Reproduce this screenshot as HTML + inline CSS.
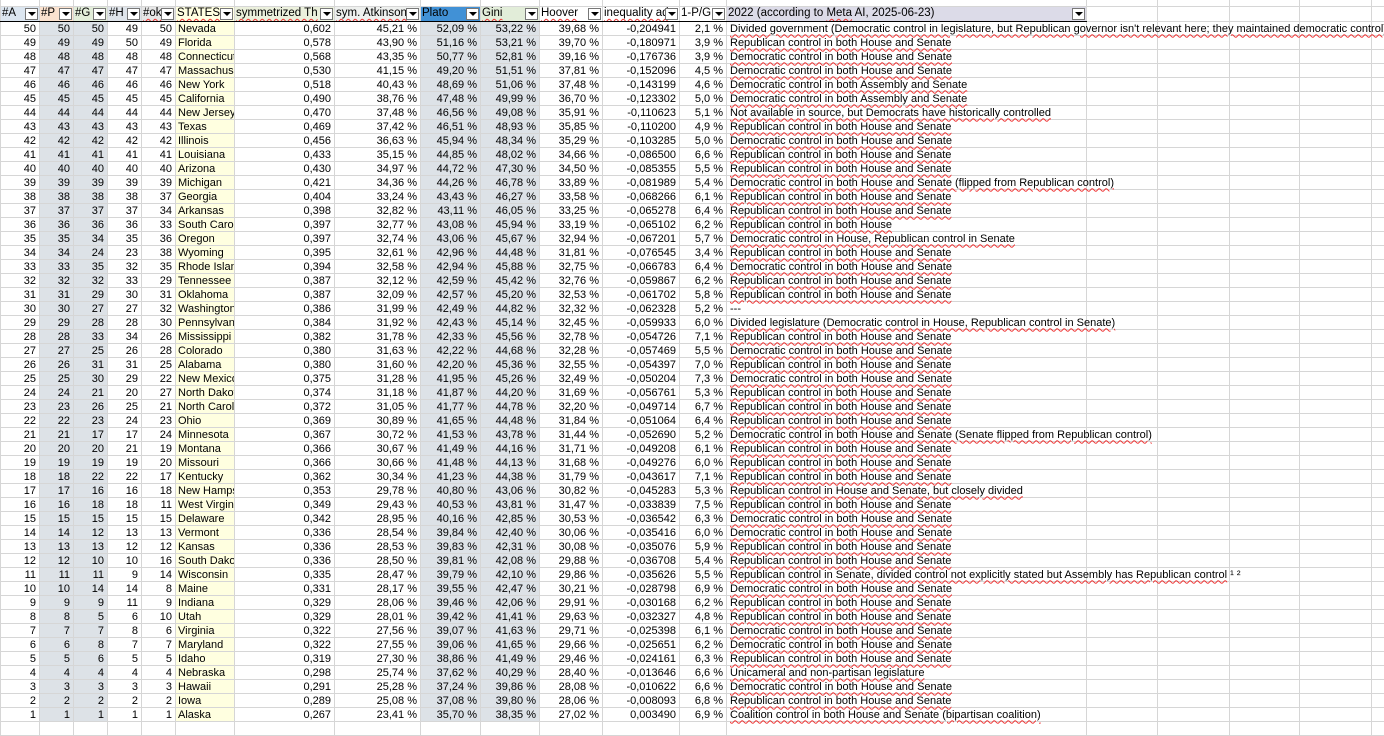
<!DOCTYPE html>
<html><head><meta charset="utf-8"><style>
*{margin:0;padding:0;box-sizing:border-box}
body{width:1384px;height:725px;overflow:hidden;background:#fff;font-family:"Liberation Sans",Arial,sans-serif;font-size:11px;color:#000}
table{border-collapse:collapse;table-layout:fixed;position:absolute;left:0;top:0;width:1384px}
td{height:14px;line-height:12px;border:1px solid #d6d6d6;white-space:nowrap;overflow:hidden;padding:1px 3px 0 2px;text-align:right}
tr.top td{height:6px;line-height:4px;padding:0;background:#fff;border-top:none}
tr.h td{height:15px;line-height:13px;border-bottom:1px solid #000;text-align:left;position:relative;padding:0 0 0 1px;overflow:hidden;font-size:11.5px}
.dd{position:absolute;right:1px;top:1px;width:13px;height:12px;background:#fff;border:1px solid #777}
.dd:after{content:"";position:absolute;left:2px;top:3px;border-left:4px solid transparent;border-right:4px solid transparent;border-top:4px solid #000}
.g{background:#dde2e7}
.y{background:#ffffe0;text-align:left;padding-left:2px}
td.t{text-align:left;overflow:visible;padding-left:3px}
td.t span{text-decoration:underline wavy #e33;text-decoration-thickness:1px;text-underline-offset:2px}
.w{text-decoration:underline wavy #e33;text-decoration-thickness:1px;text-underline-offset:2px}
</style></head><body>
<table>
<colgroup><col style="width:39px"><col style="width:34px"><col style="width:34px"><col style="width:34px"><col style="width:34px"><col style="width:59px"><col style="width:100px"><col style="width:86px"><col style="width:60px"><col style="width:59px"><col style="width:63px"><col style="width:77px"><col style="width:47px"><col style="width:360px"><col style="width:71px"><col style="width:72px"><col style="width:70px"><col style="width:72px"><col style="width:13px"></colgroup>
<tr class="top"><td></td><td></td><td></td><td></td><td></td><td></td><td></td><td></td><td></td><td></td><td></td><td></td><td></td><td></td><td></td><td></td><td></td><td></td><td></td></tr>
<tr class="h">
<td style="background:#dce6f0">#A<i class="dd"></i></td>
<td style="background:#fbe2cf">#P<i class="dd"></i></td>
<td style="background:#e2edd9">#G<i class="dd"></i></td>
<td style="background:#dfe4ea">#H<i class="dd"></i></td>
<td style="background:#e6e6e6"><span class="w">#ok</span><i class="dd"></i></td>
<td style="background:#ffffe0"><span class="w">STATES</span><i class="dd"></i></td>
<td style="background:#ebf0dc"><span class="w">symmetrized Th</span><i class="dd"></i></td>
<td style="background:#eef0ee"><span class="w">sym. Atkinson</span><i class="dd"></i></td>
<td style="background:#4191d6">Plato<i class="dd"></i></td>
<td style="background:#e2edd9"><span class="w">Gini</span><i class="dd"></i></td>
<td style="background:#fff"><span class="w">Hoover</span><i class="dd"></i></td>
<td style="background:#fff"><span class="w">inequality ad</span><i class="dd"></i></td>
<td style="background:#fff">1-P/G<i class="dd"></i></td>
<td style="background:#dcdbe8">2022 (according to <span class="w">Meta</span> AI, 2025-06-23)<i class="dd"></i></td>
<td style="border-bottom-color:#d6d6d6"></td><td style="border-bottom-color:#d6d6d6"></td><td style="border-bottom-color:#d6d6d6"></td><td style="border-bottom-color:#d6d6d6"></td><td style="border-bottom-color:#d6d6d6"></td></tr>
<tr class="d"><td>50</td><td class="g">50</td><td class="g">50</td><td>49</td><td>50</td><td class="y">Nevada</td><td>0,602</td><td>45,21 %</td><td class="g">52,09 %</td><td class="g">53,22 %</td><td>39,68 %</td><td>-0,204941</td><td>2,1 %</td><td class="t"><span>Divided government (Democratic control in legislature, but Republican governor isn't relevant here; they maintained democratic control)</span></td><td></td><td></td><td></td><td></td><td></td></tr>
<tr class="d"><td>49</td><td class="g">49</td><td class="g">49</td><td>50</td><td>49</td><td class="y">Florida</td><td>0,578</td><td>43,90 %</td><td class="g">51,16 %</td><td class="g">53,21 %</td><td>39,70 %</td><td>-0,180971</td><td>3,9 %</td><td class="t"><span>Republican control in both House and Senate</span></td><td></td><td></td><td></td><td></td><td></td></tr>
<tr class="d"><td>48</td><td class="g">48</td><td class="g">48</td><td>48</td><td>48</td><td class="y">Connecticut</td><td>0,568</td><td>43,35 %</td><td class="g">50,77 %</td><td class="g">52,81 %</td><td>39,16 %</td><td>-0,176736</td><td>3,9 %</td><td class="t"><span>Democratic control in both House and Senate</span></td><td></td><td></td><td></td><td></td><td></td></tr>
<tr class="d"><td>47</td><td class="g">47</td><td class="g">47</td><td>47</td><td>47</td><td class="y">Massachusetts</td><td>0,530</td><td>41,15 %</td><td class="g">49,20 %</td><td class="g">51,51 %</td><td>37,81 %</td><td>-0,152096</td><td>4,5 %</td><td class="t"><span>Democratic control in both House and Senate</span></td><td></td><td></td><td></td><td></td><td></td></tr>
<tr class="d"><td>46</td><td class="g">46</td><td class="g">46</td><td>46</td><td>46</td><td class="y">New York</td><td>0,518</td><td>40,43 %</td><td class="g">48,69 %</td><td class="g">51,06 %</td><td>37,48 %</td><td>-0,143199</td><td>4,6 %</td><td class="t"><span>Democratic control in both Assembly and Senate</span></td><td></td><td></td><td></td><td></td><td></td></tr>
<tr class="d"><td>45</td><td class="g">45</td><td class="g">45</td><td>45</td><td>45</td><td class="y">California</td><td>0,490</td><td>38,76 %</td><td class="g">47,48 %</td><td class="g">49,99 %</td><td>36,70 %</td><td>-0,123302</td><td>5,0 %</td><td class="t"><span>Democratic control in both Assembly and Senate</span></td><td></td><td></td><td></td><td></td><td></td></tr>
<tr class="d"><td>44</td><td class="g">44</td><td class="g">44</td><td>44</td><td>44</td><td class="y">New Jersey</td><td>0,470</td><td>37,48 %</td><td class="g">46,56 %</td><td class="g">49,08 %</td><td>35,91 %</td><td>-0,110623</td><td>5,1 %</td><td class="t"><span>Not available in source, but Democrats have historically controlled</span></td><td></td><td></td><td></td><td></td><td></td></tr>
<tr class="d"><td>43</td><td class="g">43</td><td class="g">43</td><td>43</td><td>43</td><td class="y">Texas</td><td>0,469</td><td>37,42 %</td><td class="g">46,51 %</td><td class="g">48,93 %</td><td>35,85 %</td><td>-0,110200</td><td>4,9 %</td><td class="t"><span>Republican control in both House and Senate</span></td><td></td><td></td><td></td><td></td><td></td></tr>
<tr class="d"><td>42</td><td class="g">42</td><td class="g">42</td><td>42</td><td>42</td><td class="y">Illinois</td><td>0,456</td><td>36,63 %</td><td class="g">45,94 %</td><td class="g">48,34 %</td><td>35,29 %</td><td>-0,103285</td><td>5,0 %</td><td class="t"><span>Democratic control in both House and Senate</span></td><td></td><td></td><td></td><td></td><td></td></tr>
<tr class="d"><td>41</td><td class="g">41</td><td class="g">41</td><td>41</td><td>41</td><td class="y">Louisiana</td><td>0,433</td><td>35,15 %</td><td class="g">44,85 %</td><td class="g">48,02 %</td><td>34,66 %</td><td>-0,086500</td><td>6,6 %</td><td class="t"><span>Republican control in both House and Senate</span></td><td></td><td></td><td></td><td></td><td></td></tr>
<tr class="d"><td>40</td><td class="g">40</td><td class="g">40</td><td>40</td><td>40</td><td class="y">Arizona</td><td>0,430</td><td>34,97 %</td><td class="g">44,72 %</td><td class="g">47,30 %</td><td>34,50 %</td><td>-0,085355</td><td>5,5 %</td><td class="t"><span>Republican control in both House and Senate</span></td><td></td><td></td><td></td><td></td><td></td></tr>
<tr class="d"><td>39</td><td class="g">39</td><td class="g">39</td><td>39</td><td>39</td><td class="y">Michigan</td><td>0,421</td><td>34,36 %</td><td class="g">44,26 %</td><td class="g">46,78 %</td><td>33,89 %</td><td>-0,081989</td><td>5,4 %</td><td class="t"><span>Democratic control in both House and Senate (flipped from Republican control)</span></td><td></td><td></td><td></td><td></td><td></td></tr>
<tr class="d"><td>38</td><td class="g">38</td><td class="g">38</td><td>38</td><td>37</td><td class="y">Georgia</td><td>0,404</td><td>33,24 %</td><td class="g">43,43 %</td><td class="g">46,27 %</td><td>33,58 %</td><td>-0,068266</td><td>6,1 %</td><td class="t"><span>Republican control in both House and Senate</span></td><td></td><td></td><td></td><td></td><td></td></tr>
<tr class="d"><td>37</td><td class="g">37</td><td class="g">37</td><td>37</td><td>34</td><td class="y">Arkansas</td><td>0,398</td><td>32,82 %</td><td class="g">43,11 %</td><td class="g">46,05 %</td><td>33,25 %</td><td>-0,065278</td><td>6,4 %</td><td class="t"><span>Republican control in both House and Senate</span></td><td></td><td></td><td></td><td></td><td></td></tr>
<tr class="d"><td>36</td><td class="g">36</td><td class="g">36</td><td>36</td><td>33</td><td class="y">South Carolina</td><td>0,397</td><td>32,77 %</td><td class="g">43,08 %</td><td class="g">45,94 %</td><td>33,19 %</td><td>-0,065102</td><td>6,2 %</td><td class="t"><span>Republican control in both House</span></td><td></td><td></td><td></td><td></td><td></td></tr>
<tr class="d"><td>35</td><td class="g">35</td><td class="g">34</td><td>35</td><td>36</td><td class="y">Oregon</td><td>0,397</td><td>32,74 %</td><td class="g">43,06 %</td><td class="g">45,67 %</td><td>32,94 %</td><td>-0,067201</td><td>5,7 %</td><td class="t"><span>Democratic control in House, Republican control in Senate</span></td><td></td><td></td><td></td><td></td><td></td></tr>
<tr class="d"><td>34</td><td class="g">34</td><td class="g">24</td><td>23</td><td>38</td><td class="y">Wyoming</td><td>0,395</td><td>32,61 %</td><td class="g">42,96 %</td><td class="g">44,48 %</td><td>31,81 %</td><td>-0,076545</td><td>3,4 %</td><td class="t"><span>Republican control in both House and Senate</span></td><td></td><td></td><td></td><td></td><td></td></tr>
<tr class="d"><td>33</td><td class="g">33</td><td class="g">35</td><td>32</td><td>35</td><td class="y">Rhode Island</td><td>0,394</td><td>32,58 %</td><td class="g">42,94 %</td><td class="g">45,88 %</td><td>32,75 %</td><td>-0,066783</td><td>6,4 %</td><td class="t"><span>Democratic control in both House and Senate</span></td><td></td><td></td><td></td><td></td><td></td></tr>
<tr class="d"><td>32</td><td class="g">32</td><td class="g">32</td><td>33</td><td>29</td><td class="y">Tennessee</td><td>0,387</td><td>32,12 %</td><td class="g">42,59 %</td><td class="g">45,42 %</td><td>32,76 %</td><td>-0,059867</td><td>6,2 %</td><td class="t"><span>Republican control in both House and Senate</span></td><td></td><td></td><td></td><td></td><td></td></tr>
<tr class="d"><td>31</td><td class="g">31</td><td class="g">29</td><td>30</td><td>31</td><td class="y">Oklahoma</td><td>0,387</td><td>32,09 %</td><td class="g">42,57 %</td><td class="g">45,20 %</td><td>32,53 %</td><td>-0,061702</td><td>5,8 %</td><td class="t"><span>Republican control in both House and Senate</span></td><td></td><td></td><td></td><td></td><td></td></tr>
<tr class="d"><td>30</td><td class="g">30</td><td class="g">27</td><td>27</td><td>32</td><td class="y">Washington</td><td>0,386</td><td>31,99 %</td><td class="g">42,49 %</td><td class="g">44,82 %</td><td>32,32 %</td><td>-0,062328</td><td>5,2 %</td><td class="t">---</td><td></td><td></td><td></td><td></td><td></td></tr>
<tr class="d"><td>29</td><td class="g">29</td><td class="g">28</td><td>28</td><td>30</td><td class="y">Pennsylvania</td><td>0,384</td><td>31,92 %</td><td class="g">42,43 %</td><td class="g">45,14 %</td><td>32,45 %</td><td>-0,059933</td><td>6,0 %</td><td class="t"><span>Divided legislature (Democratic control in House, Republican control in Senate)</span></td><td></td><td></td><td></td><td></td><td></td></tr>
<tr class="d"><td>28</td><td class="g">28</td><td class="g">33</td><td>34</td><td>26</td><td class="y">Mississippi</td><td>0,382</td><td>31,78 %</td><td class="g">42,33 %</td><td class="g">45,56 %</td><td>32,78 %</td><td>-0,054726</td><td>7,1 %</td><td class="t"><span>Republican control in both House and Senate</span></td><td></td><td></td><td></td><td></td><td></td></tr>
<tr class="d"><td>27</td><td class="g">27</td><td class="g">25</td><td>26</td><td>28</td><td class="y">Colorado</td><td>0,380</td><td>31,63 %</td><td class="g">42,22 %</td><td class="g">44,68 %</td><td>32,28 %</td><td>-0,057469</td><td>5,5 %</td><td class="t"><span>Democratic control in both House and Senate</span></td><td></td><td></td><td></td><td></td><td></td></tr>
<tr class="d"><td>26</td><td class="g">26</td><td class="g">31</td><td>31</td><td>25</td><td class="y">Alabama</td><td>0,380</td><td>31,60 %</td><td class="g">42,20 %</td><td class="g">45,36 %</td><td>32,55 %</td><td>-0,054397</td><td>7,0 %</td><td class="t"><span>Republican control in both House and Senate</span></td><td></td><td></td><td></td><td></td><td></td></tr>
<tr class="d"><td>25</td><td class="g">25</td><td class="g">30</td><td>29</td><td>22</td><td class="y">New Mexico</td><td>0,375</td><td>31,28 %</td><td class="g">41,95 %</td><td class="g">45,26 %</td><td>32,49 %</td><td>-0,050204</td><td>7,3 %</td><td class="t"><span>Democratic control in both House and Senate</span></td><td></td><td></td><td></td><td></td><td></td></tr>
<tr class="d"><td>24</td><td class="g">24</td><td class="g">21</td><td>20</td><td>27</td><td class="y">North Dakota</td><td>0,374</td><td>31,18 %</td><td class="g">41,87 %</td><td class="g">44,20 %</td><td>31,69 %</td><td>-0,056761</td><td>5,3 %</td><td class="t"><span>Republican control in both House and Senate</span></td><td></td><td></td><td></td><td></td><td></td></tr>
<tr class="d"><td>23</td><td class="g">23</td><td class="g">26</td><td>25</td><td>21</td><td class="y">North Carolina</td><td>0,372</td><td>31,05 %</td><td class="g">41,77 %</td><td class="g">44,78 %</td><td>32,20 %</td><td>-0,049714</td><td>6,7 %</td><td class="t"><span>Republican control in both House and Senate</span></td><td></td><td></td><td></td><td></td><td></td></tr>
<tr class="d"><td>22</td><td class="g">22</td><td class="g">23</td><td>24</td><td>23</td><td class="y">Ohio</td><td>0,369</td><td>30,89 %</td><td class="g">41,65 %</td><td class="g">44,48 %</td><td>31,84 %</td><td>-0,051064</td><td>6,4 %</td><td class="t"><span>Republican control in both House and Senate</span></td><td></td><td></td><td></td><td></td><td></td></tr>
<tr class="d"><td>21</td><td class="g">21</td><td class="g">17</td><td>17</td><td>24</td><td class="y">Minnesota</td><td>0,367</td><td>30,72 %</td><td class="g">41,53 %</td><td class="g">43,78 %</td><td>31,44 %</td><td>-0,052690</td><td>5,2 %</td><td class="t"><span>Democratic control in both House and Senate (Senate flipped from Republican control)</span></td><td></td><td></td><td></td><td></td><td></td></tr>
<tr class="d"><td>20</td><td class="g">20</td><td class="g">20</td><td>21</td><td>19</td><td class="y">Montana</td><td>0,366</td><td>30,67 %</td><td class="g">41,49 %</td><td class="g">44,16 %</td><td>31,71 %</td><td>-0,049208</td><td>6,1 %</td><td class="t"><span>Republican control in both House and Senate</span></td><td></td><td></td><td></td><td></td><td></td></tr>
<tr class="d"><td>19</td><td class="g">19</td><td class="g">19</td><td>19</td><td>20</td><td class="y">Missouri</td><td>0,366</td><td>30,66 %</td><td class="g">41,48 %</td><td class="g">44,13 %</td><td>31,68 %</td><td>-0,049276</td><td>6,0 %</td><td class="t"><span>Republican control in both House and Senate</span></td><td></td><td></td><td></td><td></td><td></td></tr>
<tr class="d"><td>18</td><td class="g">18</td><td class="g">22</td><td>22</td><td>17</td><td class="y">Kentucky</td><td>0,362</td><td>30,34 %</td><td class="g">41,23 %</td><td class="g">44,38 %</td><td>31,79 %</td><td>-0,043617</td><td>7,1 %</td><td class="t"><span>Republican control in both House and Senate</span></td><td></td><td></td><td></td><td></td><td></td></tr>
<tr class="d"><td>17</td><td class="g">17</td><td class="g">16</td><td>16</td><td>18</td><td class="y">New Hampshire</td><td>0,353</td><td>29,78 %</td><td class="g">40,80 %</td><td class="g">43,06 %</td><td>30,82 %</td><td>-0,045283</td><td>5,3 %</td><td class="t"><span>Republican control in House and Senate, but closely divided</span></td><td></td><td></td><td></td><td></td><td></td></tr>
<tr class="d"><td>16</td><td class="g">16</td><td class="g">18</td><td>18</td><td>11</td><td class="y">West Virginia</td><td>0,349</td><td>29,43 %</td><td class="g">40,53 %</td><td class="g">43,81 %</td><td>31,47 %</td><td>-0,033839</td><td>7,5 %</td><td class="t"><span>Republican control in both House and Senate</span></td><td></td><td></td><td></td><td></td><td></td></tr>
<tr class="d"><td>15</td><td class="g">15</td><td class="g">15</td><td>15</td><td>15</td><td class="y">Delaware</td><td>0,342</td><td>28,95 %</td><td class="g">40,16 %</td><td class="g">42,85 %</td><td>30,53 %</td><td>-0,036542</td><td>6,3 %</td><td class="t"><span>Democratic control in both House and Senate</span></td><td></td><td></td><td></td><td></td><td></td></tr>
<tr class="d"><td>14</td><td class="g">14</td><td class="g">12</td><td>13</td><td>13</td><td class="y">Vermont</td><td>0,336</td><td>28,54 %</td><td class="g">39,84 %</td><td class="g">42,40 %</td><td>30,06 %</td><td>-0,035416</td><td>6,0 %</td><td class="t"><span>Democratic control in both House and Senate</span></td><td></td><td></td><td></td><td></td><td></td></tr>
<tr class="d"><td>13</td><td class="g">13</td><td class="g">13</td><td>12</td><td>12</td><td class="y">Kansas</td><td>0,336</td><td>28,53 %</td><td class="g">39,83 %</td><td class="g">42,31 %</td><td>30,08 %</td><td>-0,035076</td><td>5,9 %</td><td class="t"><span>Republican control in both House and Senate</span></td><td></td><td></td><td></td><td></td><td></td></tr>
<tr class="d"><td>12</td><td class="g">12</td><td class="g">10</td><td>10</td><td>16</td><td class="y">South Dakota</td><td>0,336</td><td>28,50 %</td><td class="g">39,81 %</td><td class="g">42,08 %</td><td>29,88 %</td><td>-0,036708</td><td>5,4 %</td><td class="t"><span>Republican control in both House and Senate</span></td><td></td><td></td><td></td><td></td><td></td></tr>
<tr class="d"><td>11</td><td class="g">11</td><td class="g">11</td><td>9</td><td>14</td><td class="y">Wisconsin</td><td>0,335</td><td>28,47 %</td><td class="g">39,79 %</td><td class="g">42,10 %</td><td>29,86 %</td><td>-0,035626</td><td>5,5 %</td><td class="t"><span>Republican control in Senate, divided control not explicitly stated but Assembly has Republican control</span> ¹ ²</td><td></td><td></td><td></td><td></td><td></td></tr>
<tr class="d"><td>10</td><td class="g">10</td><td class="g">14</td><td>14</td><td>8</td><td class="y">Maine</td><td>0,331</td><td>28,17 %</td><td class="g">39,55 %</td><td class="g">42,47 %</td><td>30,21 %</td><td>-0,028798</td><td>6,9 %</td><td class="t"><span>Democratic control in both House and Senate</span></td><td></td><td></td><td></td><td></td><td></td></tr>
<tr class="d"><td>9</td><td class="g">9</td><td class="g">9</td><td>11</td><td>9</td><td class="y">Indiana</td><td>0,329</td><td>28,06 %</td><td class="g">39,46 %</td><td class="g">42,06 %</td><td>29,91 %</td><td>-0,030168</td><td>6,2 %</td><td class="t"><span>Republican control in both House and Senate</span></td><td></td><td></td><td></td><td></td><td></td></tr>
<tr class="d"><td>8</td><td class="g">8</td><td class="g">5</td><td>6</td><td>10</td><td class="y">Utah</td><td>0,329</td><td>28,01 %</td><td class="g">39,42 %</td><td class="g">41,41 %</td><td>29,63 %</td><td>-0,032327</td><td>4,8 %</td><td class="t"><span>Republican control in both House and Senate</span></td><td></td><td></td><td></td><td></td><td></td></tr>
<tr class="d"><td>7</td><td class="g">7</td><td class="g">7</td><td>8</td><td>6</td><td class="y">Virginia</td><td>0,322</td><td>27,56 %</td><td class="g">39,07 %</td><td class="g">41,63 %</td><td>29,71 %</td><td>-0,025398</td><td>6,1 %</td><td class="t"><span>Democratic control in both House and Senate</span></td><td></td><td></td><td></td><td></td><td></td></tr>
<tr class="d"><td>6</td><td class="g">6</td><td class="g">8</td><td>7</td><td>7</td><td class="y">Maryland</td><td>0,322</td><td>27,55 %</td><td class="g">39,06 %</td><td class="g">41,65 %</td><td>29,66 %</td><td>-0,025651</td><td>6,2 %</td><td class="t"><span>Democratic control in both House and Senate</span></td><td></td><td></td><td></td><td></td><td></td></tr>
<tr class="d"><td>5</td><td class="g">5</td><td class="g">6</td><td>5</td><td>5</td><td class="y">Idaho</td><td>0,319</td><td>27,30 %</td><td class="g">38,86 %</td><td class="g">41,49 %</td><td>29,46 %</td><td>-0,024161</td><td>6,3 %</td><td class="t"><span>Republican control in both House and Senate</span></td><td></td><td></td><td></td><td></td><td></td></tr>
<tr class="d"><td>4</td><td class="g">4</td><td class="g">4</td><td>4</td><td>4</td><td class="y">Nebraska</td><td>0,298</td><td>25,74 %</td><td class="g">37,62 %</td><td class="g">40,29 %</td><td>28,40 %</td><td>-0,013646</td><td>6,6 %</td><td class="t"><span>Unicameral and non-partisan legislature</span></td><td></td><td></td><td></td><td></td><td></td></tr>
<tr class="d"><td>3</td><td class="g">3</td><td class="g">3</td><td>3</td><td>3</td><td class="y">Hawaii</td><td>0,291</td><td>25,28 %</td><td class="g">37,24 %</td><td class="g">39,86 %</td><td>28,08 %</td><td>-0,010622</td><td>6,6 %</td><td class="t"><span>Democratic control in both House and Senate</span></td><td></td><td></td><td></td><td></td><td></td></tr>
<tr class="d"><td>2</td><td class="g">2</td><td class="g">2</td><td>2</td><td>2</td><td class="y">Iowa</td><td>0,289</td><td>25,08 %</td><td class="g">37,08 %</td><td class="g">39,80 %</td><td>28,06 %</td><td>-0,008093</td><td>6,8 %</td><td class="t"><span>Republican control in both House and Senate</span></td><td></td><td></td><td></td><td></td><td></td></tr>
<tr class="d"><td>1</td><td class="g">1</td><td class="g">1</td><td>1</td><td>1</td><td class="y">Alaska</td><td>0,267</td><td>23,41 %</td><td class="g">35,70 %</td><td class="g">38,35 %</td><td>27,02 %</td><td>0,003490</td><td>6,9 %</td><td class="t"><span>Coalition control in both House and Senate (bipartisan coalition)</span></td><td></td><td></td><td></td><td></td><td></td></tr>
<tr><td></td><td></td><td></td><td></td><td></td><td></td><td></td><td></td><td></td><td></td><td></td><td></td><td></td><td></td><td></td><td></td><td></td><td></td><td></td></tr>
</table>
</body></html>
